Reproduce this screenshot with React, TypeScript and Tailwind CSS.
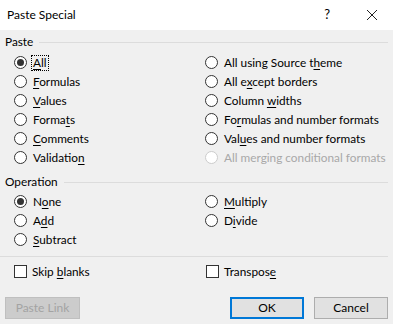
import React from 'react';

type Opt = { label: React.ReactNode; checked?: boolean; disabled?: boolean; focus?: boolean };

const u = (s: string) => <span className="underline underline-offset-2">{s}</span>;

const Radio: React.FC<Opt> = ({ label, checked, disabled, focus }) => (
  <div className="flex items-center h-[19px] whitespace-nowrap">
    <span
      className={`w-[13px] h-[13px] rounded-full border bg-white flex items-center justify-center shrink-0 ${
        disabled ? 'border-[#cccccc]' : 'border-[#333333]'
      }`}
    >
      {checked && <span className="w-[7px] h-[7px] rounded-full bg-[#333333]" />}
    </span>
    <span
      className={`ml-[4px] leading-[14px] px-[1px] border border-dotted ${
        focus ? 'border-black' : 'border-transparent'
      } ${disabled ? 'text-[#a8a8a8]' : 'text-black'}`}
    >
      {label}
    </span>
  </div>
);

const Check: React.FC<{ label: React.ReactNode }> = ({ label }) => (
  <div className="flex items-center h-[19px] whitespace-nowrap">
    <span className="w-[13px] h-[13px] border border-[#333333] bg-white shrink-0" />
    <span className="ml-[5px] leading-[14px]">{label}</span>
  </div>
);

const GroupLabel: React.FC<{ text: string }> = ({ text }) => (
  <div className="flex items-center h-[16px] pl-[5px] pr-[5px]">
    <span className="leading-[14px]">{text}</span>
    <span className="flex-1 h-px bg-[#dcdcdc] ml-[6px]" />
  </div>
);

const App: React.FC = () => {
  return (
    <div
      className="w-[393px] h-[324px] flex flex-col bg-[#f0f0f0] text-[11.8px] text-black overflow-hidden"
      style={{ fontFamily: 'Lato, "Noto Sans", sans-serif' }}
    >
      <div className="h-[30px] bg-white flex items-center pl-[7px] shrink-0">
        <span className="text-[12px]">Paste Special</span>
        <span className="ml-auto text-[13px] mr-[36px]">?</span>
        <svg width="12" height="12" viewBox="0 0 12 12" className="mr-[15px]">
          <path d="M1 1 L11 11 M11 1 L1 11" stroke="#222" strokeWidth="1" />
        </svg>
      </div>

      <div className="mt-[4px]">
        <GroupLabel text="Paste" />
        <div className="grid grid-cols-[191px_1fr] pl-[14px] mt-[3px]">
          <div className="flex flex-col">
            <Radio label={<>{u('A')}ll</>} checked focus />
            <Radio label={<>{u('F')}ormulas</>} />
            <Radio label={<>{u('V')}alues</>} />
            <Radio label={<>Forma{u('t')}s</>} />
            <Radio label={<>{u('C')}omments</>} />
            <Radio label={<>Validatio{u('n')}</>} />
          </div>
          <div className="flex flex-col">
            <Radio label={<>All using Source t{u('h')}eme</>} />
            <Radio label={<>All e{u('x')}cept borders</>} />
            <Radio label={<>Column {u('w')}idths</>} />
            <Radio label={<>Fo{u('r')}mulas and number formats</>} />
            <Radio label={<>Val{u('u')}es and number formats</>} />
            <Radio label="All merging conditional formats" disabled />
          </div>
        </div>
      </div>

      <div className="mt-[7px]">
        <GroupLabel text="Operation" />
        <div className="grid grid-cols-[191px_1fr] pl-[14px] mt-[2px]">
          <div className="flex flex-col">
            <Radio label={<>N{u('o')}ne</>} checked />
            <Radio label={<>A{u('d')}d</>} />
            <Radio label={<>{u('S')}ubtract</>} />
          </div>
          <div className="flex flex-col">
            <Radio label={<>{u('M')}ultiply</>} />
            <Radio label={<>D{u('i')}vide</>} />
          </div>
        </div>
      </div>

      <div className="h-px bg-[#dcdcdc] mt-[7px] mr-[5px]" />

      <div className="grid grid-cols-[192px_1fr] pl-[14px] mt-[5px]">
        <Check label={<>Skip {u('b')}lanks</>} />
        <Check label={<>Transpos{u('e')}</>} />
      </div>

      <div className="flex mt-[16px] px-[5px]">
        <button className="w-[75px] h-[22px] bg-[#cccccc] border border-[#bfbfbf] text-[#a3a3a3] text-[12px]">
          Paste Link
        </button>
        <button className="ml-auto w-[74px] h-[22px] bg-[#e1e1e1] border-2 border-[#0078d7] text-[12px]">
          OK
        </button>
        <button className="ml-[10px] w-[74px] h-[22px] bg-[#e1e1e1] border border-[#adadad] text-[12px]">
          Cancel
        </button>
      </div>
    </div>
  );
};

export default App;
